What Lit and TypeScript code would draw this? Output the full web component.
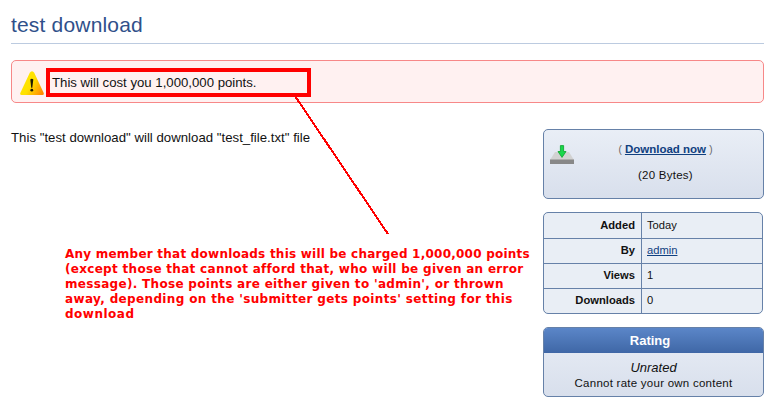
import { LitElement, html, css } from "lit";
import { customElement } from "lit/decorators.js";
import { styleMap } from "lit/directives/style-map.js";

const details = [
  { label: "Added", value: html`Today` },
  { label: "By", value: html`<a class="link">admin</a>` },
  { label: "Views", value: html`1` },
  { label: "Downloads", value: html`0` },
];

const noteLines = [
  { text: "Any member that downloads this will be charged 1,000,000 points", spacing: 0.23 },
  { text: "(except those that cannot afford that, who will be given an error", spacing: 0.3 },
  { text: "message). Those points are either given to 'admin', or thrown", spacing: 0.31 },
  { text: "away, depending on the 'submitter gets points' setting for this", spacing: 0.35 },
  { text: "download", spacing: 0.5 },
];

@customElement("app-root")
export class AppRoot extends LitElement {
  static styles = css`
    :host {
      display: block;
      position: relative;
      box-sizing: border-box;
      width: 774px;
      height: 409px;
      padding: 0 10px 0 11px;
      overflow: hidden;
      background: #fff;
      color: #111;
      font: 13.2px/16px "Liberation Sans", Arial, sans-serif;
    }
    * { box-sizing: border-box; }
    h1 {
      margin: 0;
      height: 44px;
      padding-top: 12px;
      border-bottom: 1px solid #bccbe0;
      color: #30508a;
      font-size: 21px;
      line-height: 26px;
      font-weight: 400;
      letter-spacing: 0.18px;
    }
    .warning {
      display: flex;
      align-items: center;
      height: 43px;
      margin-top: 16px;
      padding: 2px 8px 0;
      border: 1px solid #f78888;
      border-radius: 5px;
      background: #fff1f1;
    }
    .warning svg { display: block; width: 24px; height: 26px; margin-right: 8px; }
    .columns { display: flex; justify-content: space-between; margin-top: 26px; }
    .description { margin: 0; padding-top: 1px; letter-spacing: 0.02px; }
    .side { width: 221px; font-size: 11.5px; }
    .card {
      border: 1px solid #6681a8;
      border-radius: 5px;
      background: linear-gradient(#e9eef6, #d8dfec);
    }
    .download { display: flex; height: 70px; padding: 0 6px; }
    .download svg { display: block; width: 24px; height: 20px; margin-top: 15px; }
    .action { width: 183px; text-align: center; }
    .action p { margin: 0; }
    .now { padding-top: 11px; }
    .size { padding-top: 9px; letter-spacing: 0.25px; }
    .paren { color: #666; font-size: 10px; }
    .link { color: #104080; text-decoration: underline; }
    .strong { font-weight: 700; }
    .details {
      width: 220px;
      margin-top: 13px;
      border: 1px solid #6681a8;
      border-radius: 5px;
      background: #e9eef5;
      font-size: 11.2px;
    }
    .row { display: flex; height: 25px; line-height: 24px; }
    .row + .row { border-top: 1px solid #6681a8; line-height: 22px; }
    .label {
      width: 98px;
      padding-right: 6px;
      border-right: 1px solid #6681a8;
      text-align: right;
      font-weight: 700;
    }
    .value { padding-left: 5px; }
    .rating { height: 70px; margin-top: 13px; text-align: center; overflow: hidden; }
    .rating h2 {
      margin: 0;
      height: 25px;
      padding-right: 7px;
      background: linear-gradient(#5b86c8, #3f67a6);
      color: #fff;
      font-size: 13px;
      line-height: 26px;
    }
    .unrated { padding-top: 7px; font-size: 13px; font-style: italic; }
    .own { line-height: 15px; letter-spacing: 0.25px; }
    .overlay { position: absolute; left: 0; top: 0; }
    .note {
      position: absolute;
      left: 65px;
      top: 247px;
      color: #f00;
      font: 700 12px/15px "DejaVu Sans", sans-serif;
      white-space: nowrap;
    }
  `;

  render() {
    return html`
      <h1>test download</h1>
      <div class="warning">
        <svg viewBox="0 0 24 26">
          <defs>
            <linearGradient id="amber" x1="0" x2="1" y1="0.2" y2="0.8">
              <stop offset="0" stop-color="#ffe900" />
              <stop offset="0.5" stop-color="#ffe000" />
              <stop offset="1" stop-color="#ff8a00" />
            </linearGradient>
          </defs>
          <path d="M12 1.2Q13.4 1.2 14.2 2.7L23.7 23Q24.2 25 22.5 25H1.5Q-.2 25 .3 23L9.8 2.7Q10.6 1.2 12 1.2Z" fill="url(#amber)" />
          <path d="M10.3 9.5Q11.8 8.2 13.3 9.5L12.3 17.8H11.2Z" fill="#1c1803" />
          <ellipse cx="11.8" cy="20.2" rx="1.4" ry="1.4" fill="#1c1803" />
        </svg>
        <span>This will cost you 1,000,000 points.</span>
      </div>
      <div class="columns">
        <p class="description">This "test download" will download "test_file.txt" file</p>
        <div class="side">
          <div class="card download">
            <svg viewBox="0 0 24 20">
              <path d="M5 7H19L24 15H0Z" fill="#d2d2d2" />
              <rect y="14.5" width="24" height="4.5" fill="#888" />
              <path d="M10.4 .6H13.6V6.5H16L12 12.4L8 6.5H10.4Z" fill="#18d84b" stroke="#16a837" stroke-width="0.9" />
            </svg>
            <div class="action">
              <p class="now"><span class="paren">(</span> <a class="link strong">Download now</a> <span class="paren">)</span></p>
              <p class="size">(20 Bytes)</p>
            </div>
          </div>
          <div class="details">
            ${details.map((d) => html`<div class="row"><div class="label">${d.label}</div><div class="value">${d.value}</div></div>`)}
          </div>
          <div class="card rating">
            <h2>Rating</h2>
            <div class="unrated">Unrated</div>
            <div class="own">Cannot rate your own content</div>
          </div>
        </div>
      </div>
      <svg class="overlay" width="774" height="409">
        <rect x="48" y="70" width="261" height="25" fill="none" stroke="#f00" stroke-width="4" />
        <path d="M295 96L388 234" stroke="#f00" stroke-width="2" shape-rendering="crispEdges" />
      </svg>
      <div class="note">
        ${noteLines.map((line) => html`<div style=${styleMap({ letterSpacing: `${line.spacing}px` })}>${line.text}</div>`)}
      </div>
    `;
  }
}
